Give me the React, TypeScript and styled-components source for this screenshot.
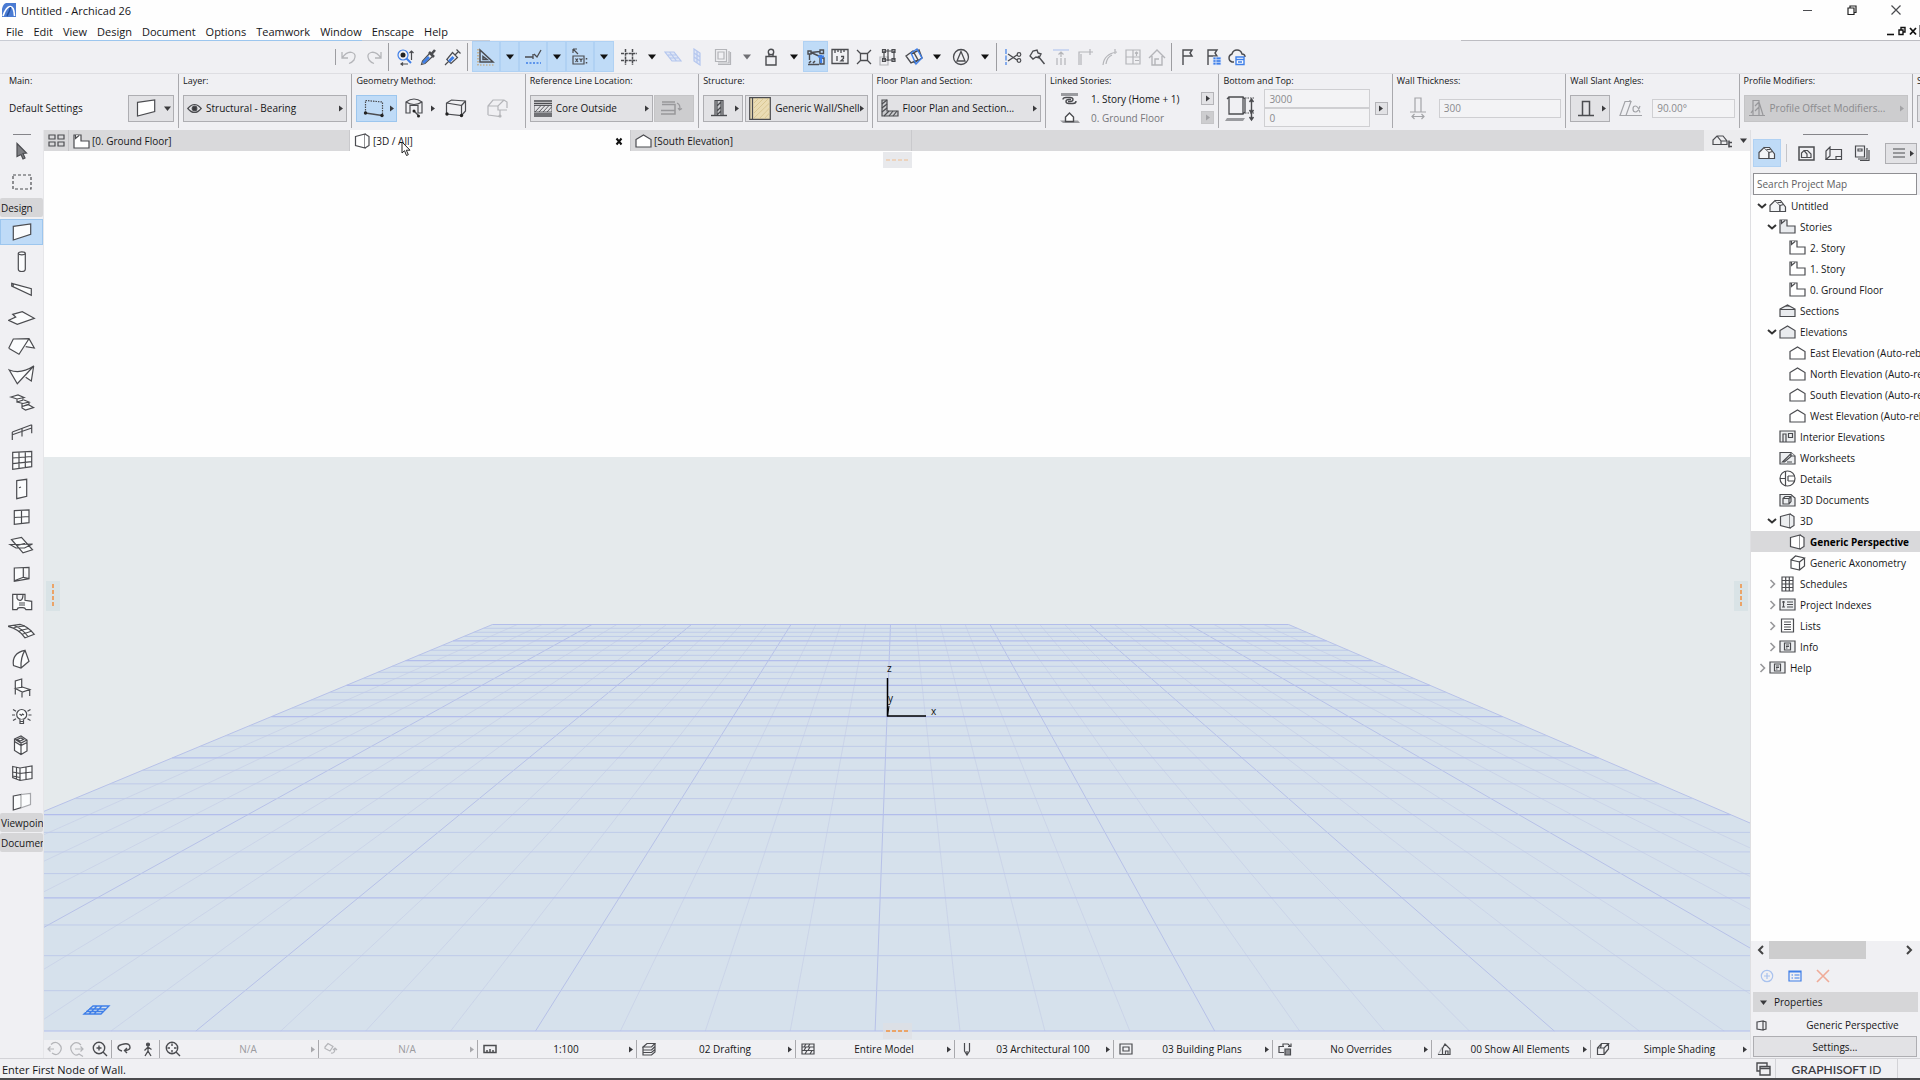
import React from "react";
import styled, { createGlobalStyle, css } from "styled-components";

const c = {
  ink: "#161618",
  line: "#4b4c50",
  faint: "#b4b5b9",
  panel: "#f0f0f3",
  white: "#fefefe",
  tab: "#d9d9db",
  blue: "#bfdbf7",
  blueEdge: "#9cc6ee",
  accent: "#3f7fe8",
};

const Global = createGlobalStyle`
  *, *::before, *::after { box-sizing: border-box; }
  html, body { margin: 0; padding: 0; }
  body { font-family: "Open Sans", "Noto Sans", sans-serif; font-size: 10px; color: ${c.ink}; background: ${c.panel}; }
  button, input { font: inherit; color: inherit; margin: 0; padding: 0; border: 0; background: none; border-radius: 0; }
  ul { list-style: none; margin: 0; padding: 0; }
  svg { display: block; flex: none; }
`;

const Page = styled.div`
  height: 100vh;
  display: flex;
  flex-direction: column;
  overflow: hidden;
  white-space: nowrap;
`;

/* ---------- title and menu ---------- */
const TitleBar = styled.header`
  display: flex;
  align-items: center;
  gap: 5px;
  height: 22px;
  padding: 0 0 2px 2px;
  background: ${c.white};
`;
const Title = styled.h1`
  flex: 1;
  margin: 0;
  font-size: 11px;
  font-weight: 400;
`;
const WindowButton = styled.button`
  width: 44px;
  height: 20px;
  display: grid;
  place-items: center;
`;
const WindowButtons = styled.div`
  display: flex;
  padding-right: 2px;
`;
const MenuBar = styled.nav`
  display: flex;
  align-items: center;
  gap: 10px;
  height: 18px;
  padding: 0 0 0 6px;
  background: ${c.white};
  font-size: 11px;
`;
const MdiButtons = styled.div`
  margin-left: auto;
  display: flex;
  gap: 1px;
  padding-right: 1px;
  border-right: 1px solid #8a8a8c;
`;
const MdiButton = styled.button`
  width: 10px;
  height: 12px;
  display: grid;
  place-items: center;
`;

/* ---------- toolbar ---------- */
const Toolbar = styled.div`
  display: flex;
  align-items: center;
  height: 33px;
  padding-left: 335px;
  background: linear-gradient(90deg, #c9ccd4 0 60px, #9cc6ee 60px 362px, #c9ccd4 362px 490px, transparent 490px 1461px, #bdbdc2 1461px) top / 100% 1px no-repeat ${c.panel};
`;
const Tool = styled.button<{ $w?: number; $on?: boolean }>`
  width: ${(p) => p.$w ?? 24}px;
  height: 31px;
  display: grid;
  place-items: center;
  ${(p) => p.$on && css`background: ${c.blue}; box-shadow: inset 0 0 0 1px #b0d1f3;`}
`;
const StartRule = styled.span`
  width: 1px;
  height: 16px;
  background: #9d9da1;
`;
const Rule = styled.span`
  width: 1px;
  height: 28px;
  margin: 0 4px 0 2px;
  background: #9d9da1;
`;

/* ---------- info box ---------- */
const InfoBox = styled.div`
  display: grid;
  grid-template-columns: 178px repeat(10, minmax(0, 1fr)) 8px;
  height: 57px;
  padding-bottom: 2px;
  border-top: 1px solid #dedee2;
  background: ${c.panel};
  overflow: hidden;
`;
const Section = styled.section<{ $first?: boolean }>`
  display: flex;
  flex-direction: column;
  min-width: 0;
  padding: 0 4px 0 ${(p) => (p.$first ? 9 : 4)}px;
  border-left: ${(p) => (p.$first ? 0 : 1)}px solid #a9a9ad;
`;
const SectionTitle = styled.h2`
  margin: 0;
  height: 14px;
  font-size: 9px;
  line-height: 14px;
  font-weight: 400;
`;
const Controls = styled.div<{ $gap?: number }>`
  display: flex;
  flex: 1;
  align-items: center;
  gap: ${(p) => p.$gap ?? 1}px;
`;
const Grow = styled.span`
  flex: 1;
  min-width: 0;
  text-align: left;
`;
const Push = styled.button<{ $w?: number; $look?: "on" | "flat" | "off" }>`
  display: flex;
  align-items: center;
  justify-content: space-between;
  gap: 4px;
  height: 27px;
  padding: 0 3px;
  ${(p) => (p.$w ? css`width: ${p.$w}px; flex: none;` : css`flex: 1; min-width: 0;`)}
  background: #e2e2e5;
  border: 1px solid #aeaeb2;
  ${(p) => p.$look === "on" && css`background: ${c.blue}; border-color: ${c.blueEdge};`}
  ${(p) => p.$look === "flat" && css`background: none; border-color: transparent;`}
  ${(p) => p.$look === "off" && css`background: #cdcdcf; border-color: #c4c4c6; color: #8b8b8e;`}
`;
const Field = styled.input`
  width: 100%;
  height: 19px;
  padding: 0 4px;
  background: #f3f3f5;
  border: 1px solid #cfcfd2;
  color: #8a8a8d;
`;
const Stack = styled.div`
  display: flex;
  flex: 1;
  flex-direction: column;
  min-width: 0;
`;
const StoryRow = styled.div<{ $dim?: boolean }>`
  display: flex;
  align-items: center;
  gap: 11px;
  height: 19px;
  padding-left: 9px;
  color: ${(p) => (p.$dim ? "#77777b" : c.ink)};
`;
const Mini = styled.button<{ $off?: boolean }>`
  width: 13px;
  height: 13px;
  flex: none;
  display: grid;
  place-items: center;
  background: ${(p) => (p.$off ? "#cdcdcf" : "#e2e2e5")};
  border: 1px solid ${(p) => (p.$off ? "#c6c6c8" : "#b4b4b8")};
`;

/* ---------- body ---------- */
const Body = styled.div`
  flex: 1;
  display: flex;
  min-height: 0;
`;
const Toolbox = styled.aside`
  width: 44px;
  flex: none;
  display: flex;
  flex-direction: column;
  align-items: stretch;
  overflow: hidden;
  background: ${c.panel};
  border-right: 1px solid #e6e6e9;
`;
const Grip = styled.span<{ $w: number }>`
  width: ${(p) => p.$w}px;
  height: 1px;
  margin: 4px auto 0;
  background: #85858a;
`;
const SideTool = styled.button`
  height: 31px;
  flex: none;
  display: grid;
  place-items: center;
`;
const SideTools = styled.div`
  display: grid;
  grid-auto-rows: 1fr;
  height: 598px;
  margin-top: 1px;
`;
const DesignTool = styled.button<{ $on?: boolean }>`
  display: grid;
  place-items: center;
  ${(p) => p.$on && css`background: ${c.blue}; box-shadow: inset 0 0 0 1px ${c.blueEdge}; margin: 1px 0;`}
`;
const GroupHead = styled.button<{ $up?: boolean }>`
  height: 19px;
  flex: none;
  margin-top: ${(p) => (p.$up ? -3 : 1)}px;
  padding-left: 1px;
  text-align: left;
  overflow: hidden;
  border-radius: 2px;
  background: #d6d6d8;
`;

const Center = styled.main`
  flex: 1;
  min-width: 0;
  display: flex;
  flex-direction: column;
`;
const Tabs = styled.div`
  display: flex;
  height: 21px;
  background: ${c.tab};
`;
const TabGrid = styled.button`
  width: 25px;
  display: grid;
  place-items: center;
  border-right: 1px solid #c5c5c8;
`;
const Tab = styled.div<{ $on?: boolean }>`
  width: 281px;
  display: flex;
  align-items: center;
  padding: 1px 6px 0 4px;
  background: ${(p) => (p.$on ? c.white : c.tab)};
  border-right: 1px solid #c9c9cc;
`;
const TabLabel = styled.button`
  flex: 1;
  display: flex;
  align-items: center;
  gap: 2px;
  height: 100%;
`;
const TabMenu = styled.button`
  width: 46px;
  margin-left: auto;
  display: flex;
  align-items: center;
  justify-content: space-between;
  padding: 0 3px 0 8px;
  background: #ececee;
`;
const Viewport = styled.div`
  position: relative;
  flex: 1;
  min-height: 0;
  display: flex;
  background: #e5eaec;
`;
const Scene = styled.svg`
  flex: 1;
  width: 100%;
  height: 100%;
  min-width: 0;
`;
const Edge = styled.span<{ $side: "left" | "right" | "top" | "bottom" }>`
  position: absolute;
  display: grid;
  place-items: center;
  background: rgba(208, 221, 226, 0.6);
  ${(p) => (p.$side === "left" || p.$side === "right") && css`width: 14px; height: 30px; top: calc(50% - 15px); ${p.$side}: 2px;`}
  ${(p) => (p.$side === "top" || p.$side === "bottom") && css`width: 29px; height: 16px; left: calc(50% - 14px); ${p.$side}: 1px; background: rgba(222, 224, 228, 0.7);`}
`;
const Pointer = styled.span`
  position: absolute;
  left: 357px;
  top: -10px;
`;

const Quick = styled.div`
  display: flex;
  height: 18px;
  background: ${c.panel};
`;
const QuickIcons = styled.div<{ $w: number }>`
  width: ${(p) => p.$w}px;
  display: flex;
  align-items: center;
  justify-content: space-around;
  border-right: 1px solid #a9a9ad;
`;
const QuickButton = styled.button`
  display: grid;
  place-items: center;
`;
const QuickCells = styled.div`
  flex: 1;
  display: grid;
  grid-template-columns: repeat(10, minmax(0, 1fr));
`;
const QuickCell = styled.button<{ $off?: boolean }>`
  display: grid;
  grid-template-columns: 20px 1fr 6px;
  align-items: center;
  padding: 0 1px 0 5px;
  border-right: 1px solid #a9a9ad;
  color: ${(p) => (p.$off ? "#9b9b9f" : c.ink)};
  &:last-child { border-right: 0; }
`;

/* ---------- navigator ---------- */
const Navigator = styled.aside`
  width: 170px;
  flex: none;
  display: flex;
  flex-direction: column;
  background: ${c.panel};
  border-left: 1px solid #dfdfe2;
  overflow: hidden;
`;
const NavTabs = styled.div`
  display: flex;
  align-items: center;
  height: 36px;
  padding: 0 3px 0 2px;
`;
const NavTab = styled.button<{ $on?: boolean }>`
  width: 28px;
  height: 28px;
  display: grid;
  place-items: center;
  ${(p) => p.$on && css`background: ${c.blue}; box-shadow: inset 0 0 0 1px #b0d1f3;`}
`;
const NavRule = styled.span`
  width: 1px;
  height: 18px;
  margin: 0 5px;
  background: #c4c4c8;
`;
const NavMenu = styled.button`
  width: 32px;
  height: 21px;
  margin-left: auto;
  display: flex;
  align-items: center;
  justify-content: space-between;
  padding: 0 2px 0 7px;
  background: #e2e2e5;
  border: 1px solid #aeaeb2;
`;
const Search = styled.input`
  height: 22px;
  margin: 2px 3px 0 2px;
  padding: 0 3px;
  background: ${c.white};
  border: 1px solid #8f8f93;
  &::placeholder { color: #5d5d61; opacity: 1; }
`;
const Tree = styled.ul`
  flex: 1;
  min-height: 0;
  overflow: hidden;
  background: ${c.white};
`;
const Node = styled.li<{ $level: number; $on?: boolean }>`
  display: flex;
  align-items: center;
  height: 21px;
  padding-left: ${(p) => 3 + p.$level * 10}px;
  ${(p) => p.$on && css`background: ${c.tab}; font-weight: 700; color: #000;`}
`;
const Twist = styled.button`
  width: 15px;
  height: 21px;
  flex: none;
  display: grid;
  place-items: center;
`;
const NodeLabel = styled.button`
  display: flex;
  align-items: center;
  gap: 4px;
  height: 21px;
  font-weight: inherit;
`;
const Scroll = styled.div`
  display: flex;
  align-items: center;
  justify-content: space-between;
  height: 18px;
  padding: 0 7px 0 6px;
`;
const Thumb = styled.span`
  width: 97px;
  height: 18px;
  margin-right: 35px;
  background: #cdcdce;
`;
const NavActions = styled.div`
  display: flex;
  align-items: center;
  gap: 14px;
  height: 33px;
  padding-left: 9px;
`;
const PropHead = styled.button`
  display: flex;
  align-items: center;
  gap: 7px;
  height: 20px;
  margin: 0 2px;
  padding-left: 7px;
  background: #d6d6d8;
`;
const PropRow = styled.div`
  display: flex;
  align-items: center;
  height: 24px;
  padding: 2px 0 0 5px;
`;
const PropName = styled.span`
  flex: 1;
  padding-left: 18px;
  text-align: center;
`;
const Settings = styled.button`
  height: 21px;
  margin: 0 3px 1px 2px;
  background: #e2e2e5;
  border: 1px solid #aeaeb2;
`;

/* ---------- status ---------- */
const Status = styled.footer`
  display: flex;
  height: 22px;
  background: ${c.panel};
  border-top: 1px solid #d3d3d7;
  border-bottom: 2px solid #4a4a4d;
  font-size: 11px;
`;
const Message = styled.span`
  flex: 1;
  padding: 1px 0 0 2px;
  line-height: 20px;
`;
const StatusIcon = styled.button`
  width: 25px;
  display: grid;
  place-items: center;
  border-right: 1px solid #d3d3d7;
`;
const Brand = styled.a`
  width: 122px;
  margin-right: 22px;
  padding-top: 1px;
  text-align: center;
  text-decoration: none;
  color: #3b3b3f;
  border-right: 1px solid #d3d3d7;
  font: 600 12px/20px Lato, sans-serif;
`;
const BrandThin = styled.span`
  font-weight: 400;
`;

/* ---------- drawings ---------- */
type DrawProps = { w?: number; h?: number; s?: string; sw?: number; f?: string; children: React.ReactNode };
const Draw = ({ w = 20, h = 20, s = c.line, sw = 1.2, f = "none", children }: DrawProps) => (
  <svg width={w} height={h} viewBox={`0 0 ${w} ${h}`} fill={f} stroke={s} strokeWidth={sw} aria-hidden="true">
    {children}
  </svg>
);
const Down = ({ s = "#111" }: { s?: string }) => (
  <Draw w={8} h={6} s="none" f={s}><path d="M0 0.5h8L4 5.500z" /></Draw>
);
const SmallDown = ({ s = "#3a3a3d" }: { s?: string }) => (
  <Draw w={7} h={5} s="none" f={s}><path d="M0 0.500h7L3.500 5z" /></Draw>
);
const Right = ({ s = "#3a3a3d" }: { s?: string }) => (
  <Draw w={4} h={7} s="none" f={s}><path d="M0 0.500v6L4 3.500z" /></Draw>
);

const HouseNav = ({ w = 18 }: { w?: number }) => (
  <Draw w={w} h={14} f="#f3f5f7">
    <path d="M1 6.500 6 1.500l5 4.500v6.500H1z" /><path d="M6 1.500h5.500L16.500 8v4.500H11V6" /><path d="M8.500 3.500h4M11 6.500l3.500-1" />
  </Draw>
);
const StoryIcon = ({ f = "#fff" }: { f?: string }) => (
  <Draw w={17} h={15} f={f}><path d="M1 1h7v6h8v7H1z" /><path d="M2.500 1v3.500L6 1.500" /></Draw>
);
const ElevIcon = ({ f = "#fff" }: { f?: string }) => (
  <Draw w={17} h={14} f={f}><path d="M1 5.500 8.500 1 16 5.500V13H1z" /></Draw>
);
const SectionIcon = () => (
  <Draw w={17} h={14} f="#e9ebee"><path d="M1 5 8.500 1 16 5v7.500H1zM1 5.500h15M2 4.500q6.500-5 13 0" /></Draw>
);
const BoxIcon = ({ f = "#fff" }: { f?: string }) => (
  <Draw w={17} h={16} f={f}><path d="M1.500 3.500 11 1v14l-9.500-2.500z" /><path d="M11 1 15 3.500v9L11 15" /></Draw>
);
const AxoIcon = () => (
  <Draw w={17} h={16} f="#fff"><path d="M2 5l8.500 2v8L2 13zM2 5l4.500-4 9 2-5 4M15.500 3v8l-5 4" /></Draw>
);
const InfoIcon = () => (
  <Draw w={17} h={13} f="#eceef0"><path d="M1 1h15v11H1z" /><path d="M5.500 3h6v7h-6zM7 5h3M7 6.500h3M7 8h1.500" /></Draw>
);
const icons: Record<string, React.ReactNode> = {
  house: <HouseNav />,
  stories: <StoryIcon f="#e9ebee" />,
  story: <StoryIcon />,
  sections: <SectionIcon />,
  elevations: <ElevIcon f="#e9ebee" />,
  elevation: <ElevIcon />,
  interior: <Draw w={17} h={13} f="#eceef0"><path d="M1 1h15v11H1zM4 12V4h3v8M9.500 3.500h4v4h-4z" /></Draw>,
  worksheet: <Draw w={17} h={14} f="#eceef0"><path d="M1 1.500h11l4 3.500v8H1z" /><path d="M3.500 11 11 3.500l1.500 1.500L5.500 11zM12 1.500V5h4M8 11h5" /></Draw>,
  detail: <Draw w={17} h={17}><circle cx="8.500" cy="8.500" r="7.500" /><path d="M6.500 1.200v15M1 8.500h5.500M9 6h7M9 11h6.500M9 6v5" /></Draw>,
  doc3d: <Draw w={17} h={14} f="#eceef0"><path d="M1 1.500h11l4 3.500v8H1z" /><path d="M4 5.500h6V11H4zM4 5.500 6 3.500h6v5l-2 2.500M10 5.500l2-2" /></Draw>,
  box: <BoxIcon />,
  boxShade: <BoxIcon f="#eceef0" />,
  axo: <AxoIcon />,
  schedule: <Draw w={17} h={16}><path d="M3 1h11v14H3zM6.700 1v14M10.300 1v14M3 4.500h11M3 8h11M3 11.500h11" /></Draw>,
  index: <Draw w={17} h={13} f="#eceef0"><path d="M1 1h15v11H1z" /><path d="M3 4h3M4.500 3v6M8 4h6M8 6.500h6M8 9h6M3 9h3" /></Draw>,
  list: <Draw w={17} h={15}><path d="M2.500 1h12v13h-12zM5 4h7M5 6.500h7M5 9h7M5 11.500h7" /></Draw>,
  info: <InfoIcon />,
};

const tree: { l: number; t: string; i: string; o?: boolean; on?: boolean }[] = [
  { l: 0, t: "Untitled", i: "house", o: true },
  { l: 1, t: "Stories", i: "stories", o: true },
  { l: 2, t: "2. Story", i: "story" },
  { l: 2, t: "1. Story", i: "story" },
  { l: 2, t: "0. Ground Floor", i: "story" },
  { l: 1, t: "Sections", i: "sections" },
  { l: 1, t: "Elevations", i: "elevations", o: true },
  { l: 2, t: "East Elevation (Auto-rebuild Model)", i: "elevation" },
  { l: 2, t: "North Elevation (Auto-rebuild Model)", i: "elevation" },
  { l: 2, t: "South Elevation (Auto-rebuild Model)", i: "elevation" },
  { l: 2, t: "West Elevation (Auto-rebuild Model)", i: "elevation" },
  { l: 1, t: "Interior Elevations", i: "interior" },
  { l: 1, t: "Worksheets", i: "worksheet" },
  { l: 1, t: "Details", i: "detail" },
  { l: 1, t: "3D Documents", i: "doc3d" },
  { l: 1, t: "3D", i: "boxShade", o: true },
  { l: 2, t: "Generic Perspective", i: "box", on: true },
  { l: 2, t: "Generic Axonometry", i: "axo" },
  { l: 1, t: "Schedules", i: "schedule", o: false },
  { l: 1, t: "Project Indexes", i: "index", o: false },
  { l: 1, t: "Lists", i: "list", o: false },
  { l: 1, t: "Info", i: "info", o: false },
  { l: 0, t: "Help", i: "info", o: false },
];

const designTools: [string, React.ReactNode][] = [
  ["Wall", <path d="M5.300 5.300 22.700 3v10.300L5.300 19z" />],
  ["Column", <><path d="M10.300 3.500v15.500q0 2.500 3.500 2.500t3.500-2.500V3.500" /><ellipse cx="13.800" cy="3.300" rx="3.500" ry="1.500" /></>],
  ["Beam", <path d="M3.700 5.300 23.300 10.700v6.600L3.700 8zM3.700 5.300l1.500 1v3" />],
  ["Slab", <path d="M.7 13.300 7.700 10 4.700 7.300l9.600-2.600 12 6.600-17 6z" />],
  ["Roof", <path d="M.7 13.300 5.300 4 21 3.700 26.300 13l-8.600-1.300M21 3.700 11 19.300.7 13.300" />],
  ["Shell", <path d="M1.300 6Q13 10.500 25.700 2L9.300 19.700zM25.700 2l-2.400 15-5.600-3.700" />],
  ["Stair", <path d="M3 5l7-2 6 2.500-7 1.500zM9 7v3l6-2V5.500M9 10l6 1.500 6-1.500-5-2M14 11.500v3l7-2V10M14 14.500l6-2 5.500 3-8 2.500-3.500-2z" />],
  ["Railing", <path d="M4.300 11 23.700 3.700M4.300 13.700 23.700 7M4.300 11v8M14 7.500v8M23.700 3.700v8.500" />],
  ["Curtain Wall", <path d="M4.700 3.300 23.700 2.300v15.400L4.700 20.300zM11 3v16.500M17.300 2.700v16M4.700 9 23.700 7.500M4.700 14.700 23.700 12.700" />],
  ["Door", <path d="M8.700 2.700 18.700 1.300v17L8.700 20.700zM11 9.800l2-.8" />],
  ["Window", <path d="M6.300 4.700 21 4v12.700L6.300 18.300zM13.500 4.400v13M6.300 11.500 21 10.500" />],
  ["Skylight", <path d="M3.500 5.500 13.500 3.300l11 12.500-9.500 3zM2 10.500h8L24.500 10l-8 4H8zM9 11.500l8-2" />],
  ["Opening", <path d="M6.300 5 21 4.300v11.400L6.300 18.300zM15.300 4.600v9.700L21 15.700M15.300 14.300l-9 3.500" />],
  ["Zone", <path d="M4.700 3.300h12.300v6l6.700 1v8.400H18q-1-2-3-2h-3.500q-2 0-2.500 2H4.700zM9 3.300v4q1 2.500 3.500 2t2.500-6M11 12h6M11 14h6" />],
  ["Mesh", <path d="M-.7 6.300 12 4.300q8 2 14.300 10l-9.300 3.500Q11 9-.7 6.300zM6 5.500q8 3 14 11M5 8q8-2 12-2M10 11.500q5-2 11-3M13.500 14.500l10.500-3.500" />],
  ["Morph", <path d="M5.500 17.500Q3.500 5 17 2.300l4 11L13 20zM17 2.300Q12.500 9 13 20" />],
  ["Object", <path d="M7.300 17.500V4L13.700 2v9M7.300 11.500l7-1.500 7.500 2.500-7.500 2.500zM14 15v5.500M21.700 12.500v6.500" />],
  ["Lamp", <><circle cx="13.700" cy="9.500" r="5" /><path d="M12 14.500v4h3.500v-4M12 16.500h3.500M11.500 9l2 1.500 1-1.500 1.500 1M5 4.500l3 1.800M22.500 4.500l-3 1.800M4 10h3M20.500 10h3M5 15.500l3-1.800M22.500 15.500l-3-1.800" /></>],
  ["Equipment", <path d="M6.500 5 13 2l6 4v11l-6 3.500-6.500-4zM6.500 5 13 9l6-3M6.500 7.500 13 11.500l6-3M13 9v11M9 5.500l4-1.500 2.500 1.500L12 7z" />],
  ["Curtain Wall System", <path d="M4.700 4.500 12 6l12-2v12.500l-12 2-7.300-3zM12 6v12.500M8.500 5.500v12M18 5v12.500M4.700 10 12 11.500 24 10M4.700 14 12 15.500" />],
  ["Corner Window", <><path d="M5.300 5 13.300 3.500v13L5.300 19zM13.300 3.500V17" /><path d="M13.300 3.500 22.500 2.500v11l-9.200 3.300" stroke="#a5a6aa" /></>],
];

/* Ground grid in perspective: 32 cells each way, every fourth line heavier. */
const H = 456;
const NEAR = 575;
const FAR = 168.5;
const CELLS = 32;
const rowY = (k: number) => H + 1 / (1 / NEAR + (k * (1 / FAR - 1 / NEAR)) / CELLS);
const colX = (k: number, y: number) => {
  const t = (y - H) / NEAR;
  const mid = 896.9 - 21.8 * t;
  return mid + (k - CELLS / 2) * 84.9 * t;
};
const steps = Array.from({ length: CELLS + 1 }, (_, k) => k);
const yNear = rowY(0);
const yFar = rowY(CELLS);

const GroundScene = () => (
  <Scene viewBox="44 151 1706 889" preserveAspectRatio="xMidYMid slice" role="img" aria-label="Perspective view of the empty ground grid">
    <rect x="-400" y="-200" width="2600" height="657" fill={c.white} />
    <rect x="-400" y="457" width="2600" height="900" fill="#e5eaec" />
    <rect x="-400" y="1031" width="2600" height="20" fill="#e3e8ee" />
    <polygon points={`${colX(0, yNear)},${yNear} ${colX(0, yFar)},${yFar} ${colX(CELLS, yFar)},${yFar} ${colX(CELLS, yNear)},${yNear}`} fill="#d6e1ec" />
    <g fill="none">
      {steps.map((k) => (
        <path key={`c${k}`} d={`M${colX(k, yNear)} ${yNear}L${colX(k, yFar)} ${yFar}`} stroke={k % 4 ? "#c6cfe6" : "#b7c1e8"} strokeWidth={k % 4 ? 0.7 : 1} />
      ))}
      {steps.map((k) => (
        <path key={`r${k}`} d={`M${colX(0, rowY(k))} ${rowY(k)}H${colX(CELLS, rowY(k))}`} stroke={k % 4 ? "#bcc8e9" : "#b2bdeb"} strokeWidth={k % 4 ? 0.9 : 1.2} />
      ))}
    </g>
    <path d="M887.500 678v38H926" fill="none" stroke="#000" strokeWidth="1.500" />
    <path d="M887.500 716 889 706" stroke="#000" strokeWidth="1" />
    <g fontSize="10" fill="#111">
      <text x="887" y="672">z</text>
      <text x="888" y="702">y</text>
      <text x="931" y="715">x</text>
    </g>
    <g stroke={c.accent} strokeWidth="1.300" fill="none">
      <path d="M84 1014 93 1006h16l-8 8zM86 1011.500h18M89 1009h17M89 1014l8-8M94 1014l8-8" />
    </g>
  </Scene>
);

const g = c.faint;
const Undo = ({ s = g, flip = false }) => (
  <Draw w={18} h={16} s={s} sw={1.3}>
    <g transform={flip ? "translate(18 0) scale(-1 1)" : undefined}><path d="M2 3v6h6M2 9Q7 2 12 3.500T14 11q-2 2.500-5 3.500" /></g>
  </Draw>
);

const quick: [string, React.ReactNode, boolean?][] = [
  ["N/A", null, true],
  ["N/A", <Draw w={14} h={14} s={g}><path d="M1 5 4 1.500l5 3L6 9 1 6.500zM7 11q4 1 4-5M9 8l2-2 2 2" /></Draw>, true],
  ["1:100", <Draw w={14} h={14} sw={1.5}><path d="M1 3.500h12v7H1zM4 10.500V8M7 10.500V7M10 10.500V8" /></Draw>],
  ["02 Drafting", <Draw w={14} h={14}><path d="M1 5 5 1.500h8L9.500 5zM1 8h8.500L13 4.500M1 10.500h8.500L13 7.500M1 5v8h8.500L13 10V1.500" /></Draw>],
  ["Entire Model", <Draw w={14} h={14}><path d="M1 2h12v10H1zM1 5h12M1 8.500h12M3 5l2-3M7 5l2-3M3 8.500 5 5M7 8.500 9 5M4 12l2-3.500M9 12l2-3.500" /></Draw>],
  ["03 Architectural 100", <Draw w={14} h={14}><path d="M4.500 1v8L7 13l2.500-4V1M7 9v4" /></Draw>],
  ["03 Building Plans", <Draw w={14} h={14}><path d="M1 2h12v10H1zM4 5h6v4H4z" /></Draw>],
  ["No Overrides", <Draw w={14} h={14}><path d="M6 10.500H1v-6h5M5 4V2h5l2 2M10 4.500h3v-3" /><path d="M7 7h5.500v6H7z" fill="#8a8b8f" /></Draw>],
  ["00 Show All Elements", <Draw w={14} h={14}><path d="M1 12.500 5.500 5" stroke={g} /><path d="M5.500 12.500v-6L8 2l5 5v5.500zM8.500 12.500V9h2.500v3.500M1 12.500h5" /></Draw>],
  ["Simple Shading", <Draw w={14} h={14}><path d="M1.500 6H8v6.500H1.500zM1.500 6 5.500 1.500h7L8 6M12.500 1.500V7L8 12.500M5.500 1.500 4.500 6" /></Draw>],
];

const Flag = ({ sheet = false }) => (
  <Draw w={18} h={18}>
    <path d="M4 17V2h9l-2 3 2 3H4" strokeWidth="1.400" />
    {sheet && <path d="M9 9h8v8H9z" fill={c.accent} stroke="#dfe9fa" strokeWidth=".8" />}
    {sheet && <path d="M9 11.700h8M9 14.300h8M12 9v8" stroke="#dfe9fa" strokeWidth=".8" />}
  </Draw>
);

export default function App() {
  return (
    <Page>
      <Global />
      <TitleBar>
        <Draw w={14} h={16} s="none" f="#4a7bd3">
          <path d="M4 1h10v14H0V7q1-5 4-6z" />
          <path d="M1 14Q4 5 8 4.500T12.500 14" stroke="#fff" strokeWidth="1.600" fill="none" />
          <path d="M5 14Q8 9 8.500 5" stroke="#24509f" strokeWidth="1.600" fill="none" />
        </Draw>
        <Title>Untitled - Archicad 26</Title>
        <WindowButtons>
          <WindowButton aria-label="Minimize"><Draw w={10} h={10} sw={1}><path d="M0 5.500h9" /></Draw></WindowButton>
          <WindowButton aria-label="Restore"><Draw w={10} h={10} s="#222"><path d="M1 3h6v6.500H1zM3 3V1h6v6.500H7" /></Draw></WindowButton>
          <WindowButton aria-label="Close"><Draw w={10} h={10}><path d="M.5.500l9 9M9.500.500l-9 9" /></Draw></WindowButton>
        </WindowButtons>
      </TitleBar>
      <MenuBar>
        {["File", "Edit", "View", "Design", "Document", "Options", "Teamwork", "Window", "Enscape", "Help"].map((m) => (
          <button key={m}>{m}</button>
        ))}
        <MdiButtons>
          <MdiButton aria-label="Minimize view"><Draw w={8} h={10} s="#111" sw={1.6}><path d="M0 8.500h7" /></Draw></MdiButton>
          <MdiButton aria-label="Restore view"><Draw w={8} h={10} s="#111" sw={1.4}><path d="M1 4h4v4.500H1zM3 4V1.500h4V6H5" /></Draw></MdiButton>
          <MdiButton aria-label="Close view"><Draw w={8} h={10} s="#111" sw={1.8}><path d="M1 2l6 6.500M7 2 1 8.500" /></Draw></MdiButton>
        </MdiButtons>
      </MenuBar>

      <Toolbar>
        <StartRule />
        <Tool $w={26} aria-label="Undo"><Undo /></Tool>
        <Tool aria-label="Redo"><Undo flip /></Tool>
        <Rule />
        <Tool aria-label="Find and select"><Draw w={18} h={18}><circle cx="7" cy="7" r="5" stroke={c.accent} /><circle cx="7" cy="7" r="2.500" fill="#222" stroke="none" /><path d="M10.500 10.500 15 15" stroke={c.accent} strokeWidth="2" /><path d="M15.500 12V3M13.500 5l2-2 2 2M12 16H5M7 14.500 5 16l2 1.500" /></Draw></Tool>
        <Tool aria-label="Pick up parameters"><Draw w={18} h={18}><path d="M10 5 2.500 13 1.500 16.500 5 15.500 13 8" /><path d="M3 15 9 9" stroke={c.accent} strokeWidth="2.600" /><path d="M9 4l5 5M11.500 6 15 2" strokeWidth="2.600" /></Draw></Tool>
        <Tool aria-label="Inject parameters"><Draw w={18} h={18}><path d="M1 17l3.500-3.500M8.500 4.500l5 5L7 15.500 2.800 11.500zM11 7l3.500-3.500M12.500 1.500l4 4" /><path d="M5 13.500 9.500 9" stroke={c.accent} strokeWidth="3" /></Draw></Tool>
        <Rule />
        <Tool $w={28} $on aria-label="Guide lines"><Draw w={18} h={18}><path d="M3 2v12h13zM6 8.500V11.500h4z" strokeWidth="1.500" /><path d="M1 1v16h16" stroke="#c69b62" strokeDasharray="1.500 1.500" /></Draw></Tool>
        <Tool $w={19} $on aria-label="Guide line options"><Down /></Tool>
        <Tool $w={28} $on aria-label="Snap guides"><Draw w={18} h={18}><path d="M1 9h8M9 6v5M10 6l3 3 4-7" strokeWidth="1.300" /><path d="M2 15h15" stroke={c.accent} strokeDasharray="2 1.500" strokeWidth="1.500" /></Draw></Tool>
        <Tool $w={19} $on aria-label="Snap options"><Down /></Tool>
        <Tool $w={28} $on aria-label="Tracker"><Draw w={18} h={18}><path d="M2 1v4M2 1h4M2 1l5 5M2 8h11v8H2zM4.500 10.500 7 14M7 10.500 4.500 14M8.500 10.500l1.500 1.700 1.500-1.700M10 12v2" /><path d="M15.500 10v1.500M15.500 14v1.500" strokeWidth="1.500" /></Draw></Tool>
        <Tool $w={20} $on aria-label="Tracker options"><Down /></Tool>
        <Tool $w={29} aria-label="Grid snap"><Draw w={18} h={18} sw={1.5}><path d="M5.500 1v16M12.500 1v16M1 5.500h16M1 12.500h16" strokeDasharray="3 .8" /></Draw></Tool>
        <Tool $w={18} aria-label="Grid options"><Down /></Tool>
        <Tool aria-label="Editing plane"><Draw w={18} h={18} s="#b4c6ee"><path d="M1 4h9l7 9H8zM4 7h9M6 10h9M5.500 4l7 9" fill="#dfe6f6" /></Draw></Tool>
        <Tool aria-label="Vertical plane"><Draw w={18} h={18} s="#b4c6ee"><path d="M6 1l6 4v12l-6-4zM9 3v12M6 5l6 4M6 9l6 4" fill="#dfe6f6" /></Draw></Tool>
        <Tool $w={28} aria-label="Trace reference"><Draw w={18} h={18} s={g}><path d="M1.500 1.500h11v12h-11z" /><path d="M4 4h6v7H4zM4 16.500h12.500V4M4 15h11V3" /></Draw></Tool>
        <Tool $w={20} aria-label="Trace options"><Down s="#707074" /></Tool>
        <Tool $w={28} aria-label="Gravity"><Draw w={18} h={18} sw={1.4}><path d="M4 8.500h10V17H4zM7 8.500V6M11 8.500V6" /><circle cx="9" cy="4" r="2.700" /></Draw></Tool>
        <Tool $w={18} aria-label="Gravity options"><Down /></Tool>
        <Tool $w={25} $on aria-label="Magic wand"><Draw w={18} h={18} sw={1.4}><path d="M1 3h3v3H1zM4 4.500l9 4M13 2h3.500v3.500H13zM4 4.500 13 3.500M2.500 6v6M13 10h4v6h-4z" /><path d="M11 8.500h6M14 7v8" stroke={c.accent} strokeWidth="2" /><path d="M1 16.500h11M2 15l2-2M6 15l2-2" strokeWidth="1.600" /></Draw></Tool>
        <Tool aria-label="Dimension"><Draw w={18} h={18} sw={1.3}><path d="M1 1.500h16v14H1zM4 1.500V5M7 1.500V4M10 1.500V5M13 1.500V4M6 8v5M10 8.500h2.500v2L10 12.800h3" /></Draw></Tool>
        <Tool aria-label="Suspend groups"><Draw w={18} h={18} sw={1.3}><path d="M5.500 5.500h7v7h-7zM2 2l3.500 3.500M16 2l-3.500 3.500M2 16l3.500-3.500M16 16l-3.500-3.500" /></Draw></Tool>
        <Tool aria-label="Group"><Draw w={18} h={18}><path d="M1 9h8v8H1z" stroke={g} /><path d="M5 3h10v9H5zM3.500 1.500h3v3h-3zM13 1.500h3v3h-3zM13 10.500h3v3h-3zM3.500 10.500h3v3h-3zM9 1v12" /></Draw></Tool>
        <Tool $w={28} aria-label="Cutting planes"><Draw w={18} h={18} sw={1.4}><path d="M1 8 8 3l5 9-7 3zM6 6l8-4 3 8-8 5" /><path d="M6 5l6-4 5 9-6 6z" stroke={c.accent} /></Draw></Tool>
        <Tool $w={18} aria-label="Cutting plane options"><Down /></Tool>
        <Tool $w={30} aria-label="Markup"><Draw w={18} h={18} sw={1.3}><circle cx="9" cy="9" r="7.500" /><path d="M9 3.500 13 13H5z" /></Draw></Tool>
        <Tool $w={18} aria-label="Markup options"><Down /></Tool>
        <Rule />
        <Tool aria-label="Split"><Draw w={18} h={18}><path d="M2 1v16" stroke={c.accent} strokeDasharray="5 1.500" /><path d="M4 6l9 6M4 13l9-6" strokeWidth="1.400" /><circle cx="15" cy="6.500" r="1.800" /><circle cx="15" cy="12.500" r="1.800" /></Draw></Tool>
        <Tool aria-label="Trim"><Draw w={18} h={18} sw={1.4}><path d="M2 8 5 3l4-1 1 3 3 1-2 4-3-1-3 2zM10 8l6.500 8" /></Draw></Tool>
        <Tool aria-label="Adjust"><Draw w={18} h={18} s={g}><path d="M1 2h16" stroke="#b4c6ee" /><path d="M9 4v5M6.500 6.500 9 4l2.500 2.500M5 10v7M9 10v7M13 10v7" /></Draw></Tool>
        <Tool aria-label="Intersect"><Draw w={18} h={18} s={g}><path d="M3 17V4h14M14 1v6M5 17V6" /></Draw></Tool>
        <Tool aria-label="Fillet"><Draw w={18} h={18} s={g}><path d="M3 17Q4 6 17 4M15 1v5M6 16Q7 9 12 7" /></Draw></Tool>
        <Tool aria-label="Resize"><Draw w={18} h={18} s={g}><path d="M2 2h14v14H2zM9 2v14M2 9h14M12.500 4v4M11 5.500 12.500 4 14 5.500M11 12.500h4" /></Draw></Tool>
        <Tool aria-label="Edit shell"><Draw w={18} h={18} s={g} sw={1.4}><path d="M1 10 9 2l8 8M4 8v9h10V8M7 17v-6h4" /></Draw></Tool>
        <Rule />
        <Tool aria-label="Mark-up flag"><Flag /></Tool>
        <Tool $w={25} aria-label="Issue list"><Flag sheet /></Tool>
        <Tool aria-label="Cloud issues"><Draw w={18} h={18} sw={1.4}><path d="M6 14H4q-3-1-3-4t3-4q1-4 5-4t5 4q3 0 3 3" /><path d="M8 9h8v7.500H8z" stroke={c.accent} fill="#fff" /><path d="M8 11.500h8M10 14h4" stroke={c.accent} /></Draw></Tool>
      </Toolbar>

      <InfoBox>
        <Section $first>
          <SectionTitle>Main:</SectionTitle>
          <Controls>
            <Grow>Default Settings</Grow>
            <Push $w={46} aria-label="Default wall settings">
              <Draw w={28} h={22} f="#fff"><path d="M5.500 5.300 22.700 3v11.500L5.500 19z" /></Draw>
              <SmallDown />
            </Push>
          </Controls>
        </Section>
        <Section>
          <SectionTitle>Layer:</SectionTitle>
          <Controls>
            <Push>
              <Draw w={15} h={11}><path d="M.8 5.500Q7.500-2.500 14.200 5.500 7.500 13.500.8 5.500z" /><circle cx="7.500" cy="5.500" r="2.300" fill="#3a3a3d" /></Draw>
              <Grow>Structural - Bearing</Grow>
              <Right />
            </Push>
          </Controls>
        </Section>
        <Section>
          <SectionTitle>Geometry Method:</SectionTitle>
          <Controls $gap={0}>
            <Push $w={41} $look="on" aria-label="Straight">
              <Draw w={26} h={22}><path d="M5.500 16V3.500L22.500 5v12.500" strokeDasharray="1.500 1" /><path d="M5.500 16 22 18.500" strokeWidth="1.500" /><circle cx="5.500" cy="16" r="1.700" fill="#222" stroke="none" /><circle cx="22" cy="18.500" r="1.700" fill="#222" stroke="none" /></Draw>
              <Right />
            </Push>
            <Push $w={42} $look="flat" aria-label="Curved">
              <Draw w={26} h={22}><path d="M5 16V5q8-6 16 0v11h-4V8.500H9V16zM5 5q8 5 16 0" /><path d="M13 14l4 4" strokeWidth="1.500" /><circle cx="13" cy="14" r="1.500" fill="#222" stroke="none" /><circle cx="17.500" cy="19" r="1.500" fill="#222" stroke="none" /></Draw>
              <Right />
            </Push>
            <Push $w={42} $look="flat" aria-label="Trapezoid">
              <Draw w={26} h={22}><path d="M3.500 17V6l5-3 14 1v10l-4 4.500zM3.500 6l15 2.500v10M18.500 8.500 22.500 4" /><circle cx="4" cy="17" r="1.700" fill="#222" stroke="none" /><circle cx="18.500" cy="18.500" r="1.700" fill="#222" stroke="none" /></Draw>
            </Push>
            <Push $w={40} $look="flat" aria-label="Polygonal">
              <Draw w={26} h={22} s={g}><path d="M3 18V9l5-6h11l3 2v6M3 9h10l6-6M13 9v4h9M3 18l12 1.500v-6" /><circle cx="15" cy="19" r="1.600" fill={g} stroke="none" /></Draw>
            </Push>
          </Controls>
        </Section>
        <Section>
          <SectionTitle>Reference Line Location:</SectionTitle>
          <Controls>
            <Push>
              <Draw w={18} h={17}><path d="M0 1h18M0 3.500h18M0 14h18M0 16h18" strokeWidth="1.400" /><path d="M0 5.500h18v6.500H0zM1 12l6-6.500M5 12l6-6.500M9 12l6-6.500M13 12l5-5.500" strokeWidth=".9" /></Draw>
              <Grow>Core Outside</Grow>
              <Right />
            </Push>
            <Push $w={40} $look="off" aria-label="Flip wall">
              <Draw w={26} h={18} s="#98989b"><path d="M4 3h13M4 5.500h13v6M3 11.500h14M3 15h14v-3.500" strokeWidth="1.500" /><path d="M19 4q4 2 2.500 7M20 9l1.500 2 2.500-1.500" /></Draw>
            </Push>
          </Controls>
        </Section>
        <Section>
          <SectionTitle>Structure:</SectionTitle>
          <Controls $gap={2}>
            <Push $w={40} aria-label="Basic structure">
              <Draw w={24} h={18}><path d="M4 16.500h16" strokeWidth="1.400" /><path d="M8 1.500h8v15H8z" fill="#c9cacd" /><path d="M10 1.500v15M14 1.500v15M10 12l4-4M10 7l4-4M10 16l4-4" /></Draw>
              <Right />
            </Push>
            <Push>
              <Draw w={22} h={23} f="#eadcb4"><path d="M.7.700h20.600v21.600H.7z" /><path d="M3.500.700v21.600" /><path d="M5 6 10 1M5 11 15 1M5 16 20 1M5 21 20.500 6M10 22l10.500-11M15 22l5.500-6" stroke="#d2bd85" strokeWidth=".7" /></Draw>
              <Grow>Generic Wall/Shell</Grow>
              <Right />
            </Push>
          </Controls>
        </Section>
        <Section>
          <SectionTitle>Floor Plan and Section:</SectionTitle>
          <Controls>
            <Push>
              <Draw w={18} h={18}><path d="M1 1h5v11h11v5H1z" fill="#c9cacd" /><path d="M1 5l5-4M1 9l5-4M1 13l5-4M3 17l5-5M8 17l4-5M12 17l4-5" /></Draw>
              <Grow>Floor Plan and Section...</Grow>
              <Right />
            </Push>
          </Controls>
        </Section>
        <Section>
          <SectionTitle>Linked Stories:</SectionTitle>
          <Controls>
            <Stack>
              <StoryRow>
                <Draw w={21} h={12}><path d="M2 1.500h17" stroke="#9a9b9f" strokeWidth="3" /><path d="M4 6.500q0-2 3-2h4q3 0 3 2t-3 2H9M17 8q0 2.500-3 2.500h-4q-3 0-3-2t3-2h2" strokeWidth="1.400" /></Draw>
                <Grow>1. Story (Home + 1)</Grow>
                <Mini aria-label="Choose top story"><Right /></Mini>
              </StoryRow>
              <StoryRow $dim>
                <Draw w={21} h={12}><path d="M1 8.500h18l2 2.500H4z" fill="#9a9b9f" stroke="none" /><path d="M6.500 9.500V5L10.500 1l4 4v4.500z" fill="#fff" strokeWidth="1.400" /></Draw>
                <Grow>0. Ground Floor</Grow>
                <Mini $off aria-label="Choose home story"><Right s="#a2a2a5" /></Mini>
              </StoryRow>
            </Stack>
          </Controls>
        </Section>
        <Section>
          <SectionTitle>Bottom and Top:</SectionTitle>
          <Controls $gap={5}>
            <Draw w={36} h={28}><path d="M6 20V3h14v17zM4 5l2-2M20 3l2 2v13l-2 2" strokeWidth="1.300" /><path d="M4 24h18l-2 3H2z" fill="#9a9b9f" stroke="none" /><path d="M22 4h9M22 19h9" strokeDasharray="1.500 1" /><path d="M28.500 5v20M26.500 8l2-3 2 3M26.500 16l2 3 2-3M26.500 23l2 3 2-3" strokeWidth="1.400" /></Draw>
            <Stack>
              <Field aria-label="Top offset" defaultValue="3000" />
              <Field aria-label="Bottom offset" defaultValue="0" />
            </Stack>
            <Mini aria-label="Height options"><Right /></Mini>
          </Controls>
        </Section>
        <Section>
          <SectionTitle>Wall Thickness:</SectionTitle>
          <Controls $gap={6}>
            <Draw w={36} h={24} s="#a3a4a8"><path d="M13 16h16M18 16V2h6v14M15 20.500h12M17.500 18l-2.500 2.500 2.500 2.500M24.500 18l2.500 2.500-2.500 2.500" /></Draw>
            <Field aria-label="Wall thickness" defaultValue="300" />
          </Controls>
        </Section>
        <Section>
          <SectionTitle>Wall Slant Angles:</SectionTitle>
          <Controls $gap={8}>
            <Push $w={40} aria-label="Vertical wall">
              <Draw w={24} h={20} sw={1.5}><path d="M4 17.500h16M8.500 17.500v-14h7v14" /></Draw>
              <Right />
            </Push>
            <Draw w={26} h={20} s="#a3a4a8"><path d="M2 17.500 7 3.500h6L8 17.500zM2 17.500h22M12 2v1" /><path d="M22 8q-2 6-4.500 6T15 11t2.500-3T22 14.500" /></Draw>
            <Field aria-label="Slant angle" defaultValue="90.00°" />
          </Controls>
        </Section>
        <Section>
          <SectionTitle>Profile Modifiers:</SectionTitle>
          <Controls>
            <Push $look="off" disabled>
              <Draw w={18} h={18} s="#98989b"><path d="M1 16.500h16M5 16.500v-15h6v15M7 12l4-4M7 7l4-4M3 14l2-3M11 3l4 13" /></Draw>
              <Grow>Profile Offset Modifiers...</Grow>
              <Right s="#a2a2a5" />
            </Push>
          </Controls>
        </Section>
        <Section>
          <SectionTitle>S</SectionTitle>
          <Controls><Push $w={20} aria-label="Surface" /></Controls>
        </Section>
      </InfoBox>

      <Body>
        <Toolbox>
          <Grip $w={18} />
          <SideTool aria-label="Arrow"><Draw w={14} h={18} f="#7d7e82"><path d="M2 1.500 11.500 11 8 11.500l2 4.500-2 1-2-4.500-4 2z" /></Draw></SideTool>
          <SideTool aria-label="Marquee"><Draw w={20} h={16}><path d="M1 1h18v14H1z" strokeDasharray="3 2" /></Draw></SideTool>
          <GroupHead>Design</GroupHead>
          <SideTools>
            {designTools.map(([name, art], i) => (
              <DesignTool key={name} $on={i === 0} aria-label={name}>
                <Draw w={28} h={22} f={i === 7 ? "none" : "#fbfcfd"}>{art}</Draw>
              </DesignTool>
            ))}
          </SideTools>
          <GroupHead $up>Viewpoint</GroupHead>
          <GroupHead>Document</GroupHead>
        </Toolbox>

        <Center>
          <Tabs>
            <TabGrid aria-label="Tab overview"><Draw w={17} h={13}><path d="M1 1h6v4H1zM10 1h6v4h-6zM1 8h6v4H1zM10 8h6v4h-6z" /></Draw></TabGrid>
            <Tab><TabLabel><StoryIcon />[0. Ground Floor]</TabLabel></Tab>
            <Tab $on>
              <TabLabel><BoxIcon />[3D / All]</TabLabel>
              <button aria-label="Close tab"><Draw w={9} h={9} s="#111" sw={2}><path d="M1.500 1.500l5 6M6.500 1.500l-5 6" /></Draw></button>
            </Tab>
            <Tab><TabLabel><ElevIcon />[South Elevation]</TabLabel></Tab>
            <TabMenu aria-label="View options">
              <Draw w={22} h={14}><path d="M1 10.500V6l4-4h6l4 5v3.500zM5 2l4 5v3.500M9 7h6" /><path d="M17 6.500v7M17 8.500h3M17 12.500h3" strokeWidth="1.600" /></Draw>
              <SmallDown />
            </TabMenu>
          </Tabs>
          <Viewport>
            <GroundScene />
            <Edge $side="left"><Draw w={2} h={26} s="#eba468" sw={2}><path d="M1 1v24" strokeDasharray="4 2" /></Draw></Edge>
            <Edge $side="right"><Draw w={2} h={26} s="#eba468" sw={2}><path d="M1 1v24" strokeDasharray="4 2" /></Draw></Edge>
            <Edge $side="top"><Draw w={26} h={2} s="#ecd3bd" sw={2}><path d="M1 1h24" strokeDasharray="4 2" /></Draw></Edge>
            <Edge $side="bottom"><Draw w={26} h={2} s="#eba468" sw={2}><path d="M1 1h24" strokeDasharray="4 2" /></Draw></Edge>
            <Pointer><Draw w={10} h={16} s="#222" sw={1} f="#fff"><path d="M1 1v11l2.500-2.300L5.500 14.500l1.800-.8-2-4.500H9z" /></Draw></Pointer>
          </Viewport>
          <Quick>
            <QuickIcons $w={68}>
              <QuickButton aria-label="Previous view"><Draw w={16} h={16} s={g}><path d="M4 3.500Q8-.5 12 3t1 8-8 1M1 8h6M3.500 5.500 1 8l2.500 2.500" /></Draw></QuickButton>
              <QuickButton aria-label="Next view"><Draw w={16} h={16} s={g}><path d="M12 4Q8 0 4 3T3 11t7 2l4 2.500M6 8h8M11.500 5.500 14 8l-2.500 2.500" /></Draw></QuickButton>
              <QuickButton aria-label="Zoom in"><Draw w={16} h={16} sw={1.4}><circle cx="7" cy="7" r="5.700" /><path d="M11 11l4 4M7 4.500v5M4.500 7h5" /></Draw></QuickButton>
            </QuickIcons>
            <QuickIcons $w={48}>
              <QuickButton aria-label="Orbit"><Draw w={14} h={14} sw={1.4}><path d="M5 9Q1 8 1 5.500T7 2t6 3.500Q13 8 8 8.500M10 6 7.500 8.500 10 11" /></Draw></QuickButton>
              <QuickButton aria-label="Explore"><Draw w={12} h={15}><circle cx="6" cy="2.500" r="1.500" fill={c.line} /><path d="M6 4v5l-3 5M6 9l3 5M2.500 8.500 6 5l3.500 2.500" strokeWidth="1.300" /></Draw></QuickButton>
            </QuickIcons>
            <QuickCells>
              {quick.map(([text, art, off], i) => (
                <QuickCell key={i} $off={off}>
                  {art ?? <Draw w={16} h={16} sw={1.4}><circle cx="7" cy="7" r="5.700" /><path d="M11 11l4 4M7 2.500v2.500M7 9v2.500M2.500 7H5M9 7h2.500" /></Draw>}
                  <span>{text}</span>
                  <Right s={off ? "#a8a8ac" : "#3a3a3d"} />
                </QuickCell>
              ))}
            </QuickCells>
          </Quick>
        </Center>

        <Navigator>
          <Grip $w={65} />
          <NavTabs>
            <NavTab $on aria-label="Project map"><HouseNav /></NavTab>
            <NavRule />
            <NavTab aria-label="View map"><Draw w={17} h={15}><path d="M1 1h15v13H1z" strokeWidth="1.500" /><path d="M3.500 11.500V7L6 4.500h3.500L13 8v3.500zM6 4.500 9 8v3.500" /></Draw></NavTab>
            <NavTab aria-label="Layout book"><Draw w={18} h={15}><path d="M1 13.500V5l4-4v9l-4 3.500h15.500V3.500H5M11 13.500v-3h5.500" /></Draw></NavTab>
            <NavTab aria-label="Publisher sets"><Draw w={16} h={16}><path d="M1.500 1h9v11h-9zM4 14h9V3M6 15.500h9V5M4 4h4v2H4z" /></Draw></NavTab>
            <NavMenu aria-label="Navigator menu"><Draw w={12} h={10}><path d="M0 1h12M0 5h12M0 9h12" /></Draw><Right /></NavMenu>
          </NavTabs>
          <Search type="search" placeholder="Search Project Map" aria-label="Search Project Map" />
          <Tree>
            {tree.map((n) => (
              <Node key={n.t} $level={n.l} $on={n.on}>
                {n.o === undefined ? (
                  <Twist as="span" />
                ) : (
                  <Twist aria-label={`${n.o ? "Collapse" : "Expand"} ${n.t}`}>
                    <Draw w={10} h={10} s={n.o ? "#333" : "#98989b"} sw={n.o ? 2 : 1.6}><path d={n.o ? "M1 3l4 3.500L9 3" : "M3.500 1l4 4-4 4"} /></Draw>
                  </Twist>
                )}
                <NodeLabel>{icons[n.i]}{n.t}</NodeLabel>
              </Node>
            ))}
          </Tree>
          <Scroll>
            <Draw w={7} h={10} s="#444" sw={2}><path d="M6 1 2 5l4 4" /></Draw>
            <Thumb />
            <Draw w={7} h={10} s="#444" sw={2}><path d="M1 1l4 4-4 4" /></Draw>
          </Scroll>
          <NavActions>
            <button aria-label="New"><Draw w={14} h={14} s="#a9c2ee"><circle cx="7" cy="7" r="5.700" /><path d="M7 4v6M4 7h6" /></Draw></button>
            <button aria-label="View settings"><Draw w={14} h={12} s={c.accent}><path d="M1 1h12v10H1zM1 2h12M3.500 5H5M3.500 8H5M6.500 5h5M6.500 8h5" /></Draw></button>
            <button aria-label="Delete"><Draw w={14} h={14} s="#efab98" sw={1.6}><path d="M1 1l12 12M13 1 1 13" /></Draw></button>
          </NavActions>
          <PropHead><SmallDown />Properties</PropHead>
          <PropRow>
            <Draw w={11} h={11}><path d="M1 2l6-1v9L1 9zM7 1l3 1v7l-3 1" /></Draw>
            <PropName>Generic Perspective</PropName>
          </PropRow>
          <Settings>Settings...</Settings>
        </Navigator>
      </Body>

      <Status>
        <Message>Enter First Node of Wall.</Message>
        <StatusIcon aria-label="Windows"><Draw w={15} h={14} sw={1.4}><path d="M4 4.500h10V13H4zM4 6.500h10M4 9H1V1h10v3" /></Draw></StatusIcon>
        <Brand href="#">GRAPHISOFT <BrandThin>ID</BrandThin></Brand>
      </Status>
    </Page>
  );
}
